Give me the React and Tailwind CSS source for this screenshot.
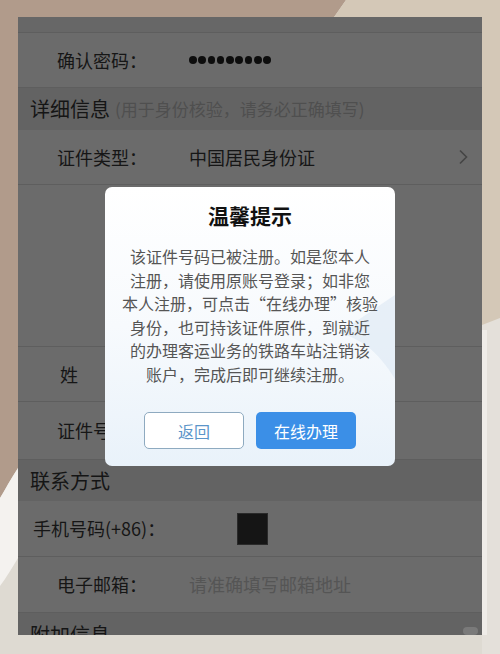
import React from 'react';

const font = { fontFamily: '"Noto Sans CJK SC", "Noto Sans", sans-serif' };

// 背景照片（桌面 + 手机边缘）
const Backdrop = () => (
  <svg className="absolute inset-0 h-full w-full" viewBox="0 0 500 654" preserveAspectRatio="none">
    <rect width="500" height="654" fill="#dedad2" />
    <path d="M0,0 L346,0 L332,20 L18,20 L18,468 C10,480 5,490 0,498 Z" fill="#b19b8b" />
    <polygon points="346,0 500,0 500,330 480,330 480,20 332,20" fill="#d4c8b7" />
    <polygon points="482,325 500,318 500,654 482,654" fill="#e4e0da" />
    <rect x="481" y="330" width="6" height="305" fill="#efece8" />
    <path d="M18,468 C10,480 5,490 0,498 L0,586 C6,578 12,568 18,558 Z" fill="#f4f2ef" />
  </svg>
);

const Row = ({ h, children, className = '' }) => (
  <div className={`flex shrink-0 items-center border-b border-[#5e5e5e] bg-[#6b6b6b] ${h} ${className}`}>
    {children}
  </div>
);

const Label = ({ children, className = 'pl-[39px] w-[170px]' }) => (
  <div className={`shrink-0 text-[18px] text-[#161616] ${className}`}>{children}</div>
);

const Header = ({ title, sub, h = 'h-[41px]' }) => (
  <div className={`flex shrink-0 items-center bg-[#636363] pl-[12px] ${h}`}>
    <span className="text-[20px] text-[#151515]">{title}</span>
    {sub && <span className="ml-[5px] text-[17px] text-[#4f4f4f]">{sub}</span>}
  </div>
);

const lines = [
  '该证件号码已被注册。如是您本人',
  '注册，请使用原账号登录；如非您',
  '本人注册，可点击“在线办理”核验',
  '身份，也可持该证件原件，到就近',
  '的办理客运业务的铁路车站注销该',
  '账户，完成后即可继续注册。',
];

export default function App() {
  return (
    <div className="relative h-[654px] w-[500px] overflow-hidden" style={font}>
      <Backdrop />
      <div className="relative ml-[18px] mt-[17px] flex h-[618px] w-[464px] flex-col overflow-hidden bg-[#6b6b6b]">
        <div className="h-[16px] shrink-0 border-b border-[#5e5e5e] bg-[#676767]" />
        <Row h="h-[55px]">
          <Label>确认密码：</Label>
          <div className="ml-[1px] flex gap-[1.8px]">
            {[0, 1, 2, 3, 4, 5, 6, 7, 8].map(i => (
              <span key={i} className="h-[7.5px] w-[7.5px] rounded-full bg-[#0d0d0d]" />
            ))}
          </div>
        </Row>
        <Header title="详细信息" sub="(用于身份核验，请务必正确填写)" h="h-[42px]" />
        <Row h="h-[55px]">
          <Label>证件类型：</Label>
          <span className="ml-[1px] text-[18px] text-[#161616]">中国居民身份证</span>
          <svg className="ml-auto mr-[14px]" width="10" height="16" viewBox="0 0 10 16">
            <path d="M2 1.5 L8.5 8 L2 14.5" fill="none" stroke="#454545" strokeWidth="1.6" />
          </svg>
        </Row>
        <Row h="h-[162px]" />
        <Row h="h-[55px]">
          <Label className="pl-[42px] w-[170px]">姓</Label>
        </Row>
        <Row h="h-[58px]">
          <Label>证件号码：</Label>
        </Row>
        <Header title="联系方式" />
        <Row h="h-[56px]">
          <Label className="pl-[15px] w-[219px]">手机号码(+86)：</Label>
          <div className="h-[32px] w-[31px] border border-[#2a2a2a] bg-[#151515]" />
        </Row>
        <Row h="h-[56px]">
          <Label>电子邮箱：</Label>
          <span className="ml-[1px] text-[18px] text-[#555555]">请准确填写邮箱地址</span>
        </Row>
        <div className="relative shrink-0">
          <Header title="附加信息" h="h-[44px]" />
          <div className="absolute right-[4px] top-[14px] h-[8px] w-[15px] rounded-full bg-[#7a7a7a]" />
        </div>

        {/* 弹窗 */}
        <div className="absolute left-[87px] top-[170px] flex h-[279px] w-[290px] flex-col items-center overflow-hidden rounded-[7px] bg-gradient-to-b from-[#ffffff] via-[#f7fafd] to-[#e9f2fa]">
          <svg className="absolute right-0 top-[100px]" width="60" height="100" viewBox="0 0 60 100">
            <path d="M60 8 C42 20 22 34 4 46 C22 50 42 62 60 92 Z" fill="#dce8f3" opacity="0.6" />
          </svg>
          <div className="relative mt-[14px] text-[21px] font-bold leading-[28px] text-[#111111]">温馨提示</div>
          <div className="relative mt-[16px] flex flex-col items-center text-[16px] leading-[23.5px] text-[#555555]">
            {lines.map((l, i) => (
              <div key={i} className="whitespace-nowrap">{l}</div>
            ))}
          </div>
          <div className="relative mt-auto mb-[17px] flex gap-[12px]">
            <button className="h-[37px] w-[100px] rounded-[5px] border border-[#8eaac0] bg-white text-[16px] text-[#5b95c9]">
              返回
            </button>
            <button className="h-[37px] w-[100px] rounded-[5px] bg-[#3b8fe7] text-[16px] text-white">
              在线办理
            </button>
          </div>
        </div>
      </div>
    </div>
  );
}
